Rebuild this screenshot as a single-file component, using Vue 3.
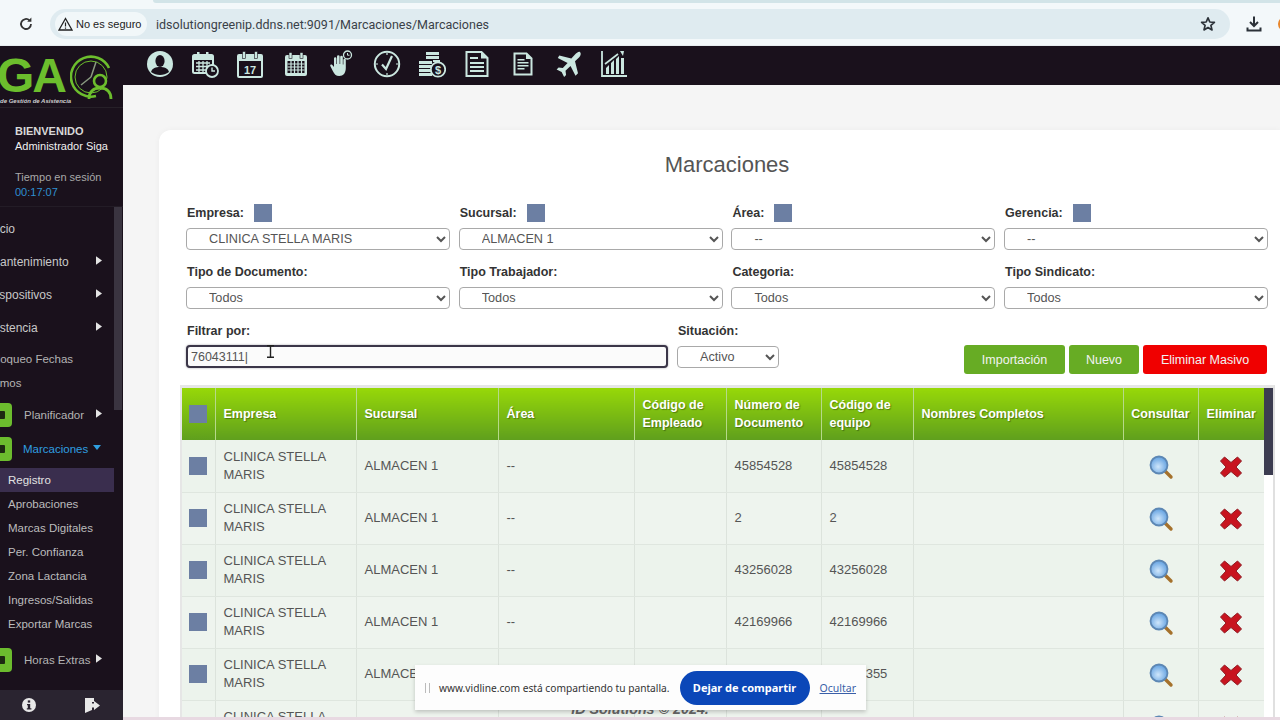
<template>
  <div class="page">
    <!-- browser bar -->
    <header class="chrome">
      <div class="tab-strip"></div>
      <div class="chrome-row">
        <svg class="reload" width="16" height="16" viewBox="0 0 16 16"><path d="M13 8a5 5 0 1 1-1.500-3.600" fill="none" stroke="#333" stroke-width="1.800"/><path d="M13.400 1.600v4.200H9.200z" fill="#333"/></svg>
        <div class="omnibox">
          <div class="chip">
            <svg width="15" height="14" viewBox="0 0 15 14"><path d="M7.500 1.500 14 13H1z" fill="none" stroke="#222" stroke-width="1.300"/><path d="M7.500 5.500v4M7.500 10.400v1.300" stroke="#222" stroke-width="1.200"/></svg>
            <span>No es seguro</span>
          </div>
          <span class="url">idsolutiongreenip.ddns.net:9091/Marcaciones/Marcaciones</span>
          <svg class="star" width="16" height="16" viewBox="0 0 16 16"><path d="M8 1.800 9.800 6l4.600.4-3.500 3 1.100 4.500L8 11.500l-4 2.400 1.100-4.500-3.500-3L6.200 6z" fill="none" stroke="#2b3138" stroke-width="1.700" stroke-linejoin="round"/></svg>
        </div>
        <svg class="download" width="18" height="18" viewBox="0 0 18 18"><path d="M9 1.500v9M5 7l4 4 4-4" fill="none" stroke="#2b3138" stroke-width="2"/><path d="M2.500 12.500v3h13v-3" fill="none" stroke="#2b3138" stroke-width="2"/></svg>
        <div class="avatar"></div>
      </div>
    </header>

    <div class="shell">
      <aside class="sidebar">
        <div class="logo">
          <span class="logo-ga">GA</span>
          <svg class="logo-mark" width="44" height="48" viewBox="0 0 44 48">
            <path d="M26 41A20 20 0 1 1 39 13" fill="none" stroke="#6cbe2d" stroke-width="2.600"/>
            <circle cx="21" cy="22" r="16" fill="none" stroke="#6cbe2d" stroke-width="1"/>
            <path d="M21 22 26 7M21 22 11 30" stroke="#8a9a80" stroke-width="1.500"/>
            <circle cx="30" cy="26" r="6" fill="#1a111c" stroke="#6cbe2d" stroke-width="2.600"/>
            <path d="M19 44c0-8 5-11 11-11s11 3 11 11" fill="none" stroke="#6cbe2d" stroke-width="2.800"/>
          </svg>
          <span class="logo-sub">de Gestión de Asistencia</span>
        </div>
        <div class="welcome">
          <strong>BIENVENIDO</strong>
          <span class="admin">Administrador Siga</span>
          <span class="session">Tiempo en sesión</span>
          <span class="time">00:17:07</span>
        </div>
        <nav class="nav">
          <div v-for="item in navItems" :key="item.label" class="nav-row" :class="item.kind">
            <span v-if="item.kind.startsWith('tile-row')" class="tile"><i></i></span>
            <span class="nav-label" :style="{ marginLeft: item.shift + 'px' }">{{ item.label }}</span>
            <svg v-if="item.arrow === 'right'" class="arrow" width="6" height="9" viewBox="0 0 7 10"><path d="M0 0l7 5-7 5z" fill="#e4e4e4"/></svg>
            <svg v-if="item.arrow === 'down'" class="arrow down" width="8" height="5" viewBox="0 0 10 6"><path d="M0 0h10L5 6z" fill="#2f9fe0"/></svg>
          </div>
        </nav>
        <div class="side-scroll"></div>
        <div class="side-foot">
          <svg width="14" height="14" viewBox="0 0 14 14"><circle cx="7" cy="7" r="7" fill="#e8e8e8"/><rect x="5.800" y="2.400" width="2.400" height="2.200" fill="#2a2430"/><path d="M5 6h3.200v4.200H9.400v1.400H4.800v-1.400h1V7.200H5z" fill="#2a2430"/></svg>
          <svg width="17" height="17" viewBox="0 0 17 17"><path d="M1 1h9v4H8v8l-7 3z" fill="#e8e8e8"/><path d="M10 6.500V4l6 4.500-6 4.500v-2.500H8v-4z" fill="#e8e8e8"/></svg>
        </div>
      </aside>

      <div class="main">
        <div class="topbar">
          <!-- user -->
          <span class="top-icon"><svg width="28" height="28" viewBox="0 0 28 28"><circle cx="14" cy="14" r="13" fill="#cbe7e0"/><ellipse cx="14" cy="11" rx="4.600" ry="6" fill="#1a111c"/><path d="M5 22c1-4 5-5 9-5s8 1 9 5c-2.500 2-6 3-9 3s-6.500-1-9-3z" fill="#1a111c"/></svg></span>
          <!-- calendar + clock -->
          <span class="top-icon"><svg width="28" height="28" viewBox="0 0 28 28"><rect x="2" y="5" width="20" height="18" rx="1.500" fill="none" stroke="#cbe7e0" stroke-width="2"/><rect x="2" y="5" width="20" height="5" fill="#cbe7e0"/><rect x="6" y="2" width="2.500" height="6" fill="#cbe7e0"/><rect x="15" y="2" width="2.500" height="6" fill="#cbe7e0"/><path d="M5 13h14M5 16.500h14M5 20h10M8 11v11M12 11v11M16 11v7" stroke="#cbe7e0" stroke-width="1.300"/><circle cx="21" cy="21" r="6" fill="#1a111c" stroke="#cbe7e0" stroke-width="1.800"/><path d="M21 17.500V21h3" fill="none" stroke="#cbe7e0" stroke-width="1.400"/></svg></span>
          <!-- calendar 17 -->
          <span class="top-icon"><svg width="28" height="28" viewBox="0 0 28 28"><rect x="2" y="5" width="24" height="22" rx="1" fill="none" stroke="#cbe7e0" stroke-width="2"/><rect x="2" y="5" width="24" height="6" fill="#cbe7e0"/><rect x="6.500" y="1.500" width="3" height="7" fill="#cbe7e0" stroke="#1a111c" stroke-width=".6"/><rect x="18.500" y="1.500" width="3" height="7" fill="#cbe7e0" stroke="#1a111c" stroke-width=".6"/><text x="14" y="23.500" text-anchor="middle" class="cal-num">17</text></svg></span>
          <!-- calendar grid -->
          <span class="top-icon"><svg width="26" height="26" viewBox="0 0 26 26"><rect x="2" y="4" width="22" height="21" rx="2" fill="#cbe7e0"/><rect x="6" y="1.500" width="3" height="6" fill="#cbe7e0" stroke="#1a111c" stroke-width=".6"/><rect x="17" y="1.500" width="3" height="6" fill="#cbe7e0" stroke="#1a111c" stroke-width=".6"/><rect x="4.500" y="10" width="17" height="12" fill="#1a111c"/><path d="M4.500 13h17M4.500 16h17M4.500 19h17M8 10v12M11.500 10v12M15 10v12M18.500 10v12" stroke="#cbe7e0" stroke-width="1.200"/></svg></span>
          <!-- hand + clock -->
          <span class="top-icon"><svg width="24" height="28" viewBox="0 0 24 28"><path d="M5 8.500a1.200 1.200 0 0 1 2.400 0V14h.6V6.500a1.300 1.300 0 0 1 2.600 0V14h.6V7a1.300 1.300 0 0 1 2.600 0v7.500h.6V10a1.200 1.200 0 0 1 2.400 0v8c0 5-2.500 8-6.500 8-3.500 0-5-2-6.500-5l-2.500-5c-.5-1.200 1-2 2-1l1.700 2z" fill="#cbe7e0"/><circle cx="18.500" cy="5" r="4" fill="none" stroke="#cbe7e0" stroke-width="1.300"/><path d="M18.500 3v2.200h2" fill="none" stroke="#cbe7e0"/></svg></span>
          <!-- clock check -->
          <span class="top-icon"><svg width="28" height="28" viewBox="0 0 28 28"><circle cx="14" cy="14" r="12.200" fill="none" stroke="#cbe7e0" stroke-width="2"/><path d="M9 14.500l4 4.500 6-13" fill="none" stroke="#cbe7e0" stroke-width="2.200"/><path d="M14 3v2M14 23v2M3 14h2M23 14h2" stroke="#cbe7e0" stroke-width="1.200"/></svg></span>
          <!-- coins -->
          <span class="top-icon"><svg width="28" height="28" viewBox="0 0 28 28"><path d="M1 11h13v3H1zM1 15h13v3H1zM1 19h13v3H1zM1 23h13v3H1zM8 2h13v3H8zM8 6h13v3H8z" fill="#cbe7e0"/><path d="M15 10h7v2h-7z" fill="#cbe7e0"/><circle cx="20" cy="19.500" r="7.200" fill="#1a111c" stroke="#cbe7e0" stroke-width="1.800"/><text x="20" y="23.500" text-anchor="middle" class="coin-sign">$</text></svg></span>
          <!-- big doc -->
          <span class="top-icon"><svg width="26" height="28" viewBox="0 0 26 28"><path d="M2.500 2h15l6 6v18h-21z" fill="none" stroke="#cbe7e0" stroke-width="2"/><path d="M17 2v6.500h6.500z" fill="#cbe7e0"/><path d="M6 7h8v2H6zM6 12h14v2H6zM6 16h14v2H6zM6 20h14v2H6z" fill="#cbe7e0"/></svg></span>
          <!-- small doc -->
          <span class="top-icon"><svg width="20" height="24" viewBox="0 0 20 24"><path d="M1.500 1.500h12l5 5v16h-17z" fill="none" stroke="#cbe7e0" stroke-width="2"/><path d="M13 1.500v5.500h5.500z" fill="#cbe7e0"/><path d="M4.500 7h7v1.500h-7zM4.500 10h11v1.500h-11zM4.500 13h11v1.500h-11zM4.500 16h7v1.500h-7z" fill="#cbe7e0"/></svg></span>
          <!-- plane -->
          <span class="top-icon"><svg width="28" height="28" viewBox="0 0 28 28"><path d="M26 2c1.500 1.500.5 4-1 5.500l-4 3.800 3 12-2.500 2.500-5-9.800-5 4.800.6 4.200-2 2-2.500-5-5-2.500 2-2 4.200.6 4.800-5-9.800-5L5.300 5.600l12 3L21 4.500C22.500 3 24.700 1 26 2z" fill="#cbe7e0"/></svg></span>
          <!-- chart -->
          <span class="top-icon"><svg width="28" height="28" viewBox="0 0 28 28"><path d="M2 1v25h25" fill="none" stroke="#cbe7e0" stroke-width="1.800"/><path d="M6 24v-6l3-3v9zM11 24V13l3-3v14zM16 24V9l3-3v18zM21 24V8h3v16z" fill="#cbe7e0"/><path d="M5 14 18 4" stroke="#cbe7e0" stroke-width="1.600"/><path d="M20 1l4 0-1 5z" fill="#cbe7e0"/></svg></span>
        </div>

        <div class="content">
          <section class="card">
            <h1>Marcaciones</h1>

            <div class="filters">
              <div v-for="field in filterFields" :key="field.label" class="field">
                <label>
                  {{ field.label }}
                  <span v-if="field.check" class="check"></span>
                </label>
                <select>
                  <option>{{ field.value }}</option>
                </select>
              </div>
            </div>

            <div class="search-row">
              <div class="field filter-by">
                <label>Filtrar por:</label>
                <input type="text" value="76043111|" />
                <svg class="ibeam" width="9" height="13" viewBox="0 0 9 13"><path d="M1 .7h7M4.500 .7v11.600M1 12.300h7" stroke="#222" stroke-width="1.400" fill="none"/></svg>
              </div>
              <div class="field status">
                <label>Situación:</label>
                <select>
                  <option>Activo</option>
                </select>
              </div>
              <div class="actions">
                <button class="btn green wide">Importación</button>
                <button class="btn green">Nuevo</button>
                <button class="btn red">Eliminar Masivo</button>
              </div>
            </div>

            <div class="table-wrap">
              <table>
                <colgroup>
                  <col v-for="w in colWidths" :key="w.id" :width="w.size" />
                </colgroup>
                <thead>
                  <tr>
                    <th class="center"><span class="check"></span></th>
                    <th>Empresa</th>
                    <th>Sucursal</th>
                    <th>Área</th>
                    <th>Código de Empleado</th>
                    <th>Número de Documento</th>
                    <th>Código de equipo</th>
                    <th>Nombres Completos</th>
                    <th class="center">Consultar</th>
                    <th class="center">Eliminar</th>
                  </tr>
                </thead>
                <tbody>
                  <tr v-for="(row, i) in rows" :key="i">
                    <td class="center"><span class="check"></span></td>
                    <td>CLINICA STELLA MARIS</td>
                    <td>ALMACEN 1</td>
                    <td>--</td>
                    <td></td>
                    <td>{{ row }}</td>
                    <td>{{ row }}</td>
                    <td></td>
                    <td class="center">
                      <svg width="26" height="26" viewBox="0 0 26 26">
                        <defs>
                          <radialGradient id="lens" cx="45%" cy="60%" r="60%"><stop offset="0" stop-color="#cfe6fb"/><stop offset="1" stop-color="#5f9fe0"/></radialGradient>
                        </defs>
                        <path d="M16 16l7 7" stroke="#a5712c" stroke-width="3.400" stroke-linecap="round"/>
                        <circle cx="11" cy="11" r="8.500" fill="url(#lens)" stroke="#5d87b4" stroke-width="1.800"/>
                      </svg>
                    </td>
                    <td class="center">
                      <svg width="24" height="24" viewBox="0 0 24 24">
                        <path d="M5.500 2 12 7.500 18.500 2 22.500 6 17 12l5.500 6-4 4L12 16.500 5.500 22l-4-4L7 12 1.500 6z" fill="#c8141f" stroke="#8f1a22" stroke-width="1" stroke-linejoin="round"/>
                      </svg>
                    </td>
                  </tr>
                </tbody>
              </table>
              <div class="table-scroll"><div class="thumb"></div></div>
            </div>
          </section>
        </div>
      </div>
    </div>

    <div class="copyright">ID Solutions © 2024.</div>
    <div class="bottom-strip"></div>

    <!-- screen share notice -->
    <div class="share">
      <span class="grip"></span>
      <span class="share-text">www.vidline.com está compartiendo tu pantalla.</span>
      <button class="stop">Dejar de compartir</button>
      <a class="hide">Ocultar</a>
    </div>
  </div>
</template>

<script setup>
const navItems = [
  { label: 'Inicio', kind: 'big', shift: -13 },
  { label: 'Mantenimiento', kind: 'big', shift: -10, arrow: 'right' },
  { label: 'Dispositivos', kind: 'big', shift: -12, arrow: 'right' },
  { label: 'Asistencia', kind: 'big', shift: -17, arrow: 'right' },
  { label: 'Bloqueo Fechas', kind: 'small first-small', shift: -10 },
  { label: 'Ramos', kind: 'small', shift: -15 },
  { label: 'Planificador', kind: 'tile-row plan', shift: 12, arrow: 'right' },
  { label: 'Marcaciones', kind: 'tile-row marc', shift: 11, arrow: 'down' },
  { label: 'Registro', kind: 'sub active', shift: 8 },
  { label: 'Aprobaciones', kind: 'sub', shift: 8 },
  { label: 'Marcas Digitales', kind: 'sub', shift: 8 },
  { label: 'Per. Confianza', kind: 'sub', shift: 8 },
  { label: 'Zona Lactancia', kind: 'sub', shift: 8 },
  { label: 'Ingresos/Salidas', kind: 'sub', shift: 8 },
  { label: 'Exportar Marcas', kind: 'sub', shift: 8 },
  { label: 'Horas Extras', kind: 'tile-row horas', shift: 12, arrow: 'right' }
]

const filterFields = [
  { label: 'Empresa:', value: 'CLINICA STELLA MARIS', check: true },
  { label: 'Sucursal:', value: 'ALMACEN 1', check: true },
  { label: 'Área:', value: '--', check: true },
  { label: 'Gerencia:', value: '--', check: true },
  { label: 'Tipo de Documento:', value: 'Todos' },
  { label: 'Tipo Trabajador:', value: 'Todos' },
  { label: 'Categoria:', value: 'Todos' },
  { label: 'Tipo Sindicato:', value: 'Todos' }
]

const colWidths = [33, 141, 142, 136, 92, 95, 92, 210, 75, 66].map((size, id) => ({ id, size }))

const rows = ['45854528', '2', '43256028', '42169966', '41628355', '40112233']
</script>

<style>
html,
body {
  margin: 0;
  height: 720px;
  overflow: hidden;
}
</style>

<style scoped>
.page {
  position: relative;
  width: 1280px;
  height: 720px;
  overflow: hidden;
  display: flex;
  flex-direction: column;
  font-family: "Liberation Sans", Arial, sans-serif;
  background: #f4f4f4;
}

.chrome {
  height: 46px;
  flex: none;
  background: #f3f8fa;
  position: relative;
  border-bottom: 1px solid #e6ecef;
  box-sizing: border-box;
}

.tab-strip {
  height: 3px;
  margin-left: 153px;
  background: #d2e4e8;
  border-bottom-left-radius: 6px;
}

.chrome-row {
  display: flex;
  align-items: center;
  height: 30px;
  margin-top: 6px;
}

.chrome-row svg {
  flex: none;
}

.reload {
  margin-left: 18px;
  margin-right: 16px;
}

.omnibox {
  width: 1180px;
  height: 30px;
  flex: none;
  box-sizing: border-box;
  border-radius: 15px;
  background: #dfebf0;
  display: flex;
  align-items: center;
  padding-left: 5px;
  padding-right: 14px;
}

.chip {
  display: flex;
  align-items: center;
  gap: 3px;
  height: 24px;
  width: 92px;
  box-sizing: border-box;
  padding-left: 3px;
  border-radius: 12px;
  background: #f1f7f9;
  font-size: 11px;
  color: #222;
  white-space: nowrap;
}

.url {
  margin-left: 9px;
  font-family: Roboto, sans-serif;
  font-size: 12.500px;
  color: #3a4148;
  white-space: nowrap;
}

.star {
  margin-left: auto;
}

.download {
  margin-left: 15px;
}

.avatar {
  width: 14px;
  height: 14px;
  flex: none;
  margin-left: 15px;
  border-radius: 7px 0 0 7px;
  background: #e8862a;
}

.shell {
  flex: 1;
  display: flex;
  min-height: 0;
}

.sidebar {
  position: relative;
  width: 123px;
  flex: none;
  background: #1a111c;
  color: #d4d4d4;
  display: flex;
  flex-direction: column;
}

.logo {
  position: relative;
  height: 62px;
  border-bottom: 1px solid #262028;
  box-sizing: border-box;
}

.logo-ga {
  position: absolute;
  left: -3px;
  top: 2px;
  font-size: 48px;
  line-height: 56px;
  font-weight: 700;
  letter-spacing: -2px;
  color: #6cbe2d;
}

.logo-mark {
  position: absolute;
  left: 70px;
  top: 9px;
}

.logo-sub {
  position: absolute;
  left: 0;
  top: 52px;
  font-size: 6px;
  font-style: italic;
  font-weight: 700;
  color: #cfcfcf;
  white-space: nowrap;
}

.welcome {
  display: flex;
  flex-direction: column;
  height: 99px;
  box-sizing: border-box;
  padding: 16px 0 0 15px;
  font-size: 11px;
  line-height: 15px;
  border-bottom: 1px solid #231c26;
}

.welcome strong {
  color: #d8d8d8;
}

.admin {
  color: #f0f0f0;
}

.session {
  margin-top: 16px;
  color: #a9a9a9;
}

.time {
  color: #2f8fd0;
}

.nav {
  padding-top: 5px;
  width: 114px;
  overflow: hidden;
}

.nav-row {
  position: relative;
  display: flex;
  align-items: center;
  white-space: nowrap;
}

.nav-row.big {
  height: 33px;
  font-size: 12px;
  color: #c8c8c8;
}

.nav-row.small {
  height: 24px;
  font-size: 11.500px;
  color: #b4b4b4;
}

.nav-row.first-small {
  margin-top: 3px;
}

.nav-row.tile-row {
  height: 24px;
  font-size: 11.500px;
  color: #b4b4b4;
}

.nav-row.plan {
  margin-top: 8px;
}

.nav-row.marc {
  margin-top: 10px;
  margin-bottom: 7px;
  color: #2f9fe0;
}

.nav-row.horas {
  margin-top: 12px;
}

.nav-row.sub {
  height: 24px;
  font-size: 11.500px;
  color: #bcbcbc;
}

.nav-row.active {
  background: #3a2e4e;
  color: #e2e2e2;
}

.tile {
  width: 12px;
  height: 24px;
  flex: none;
  border-radius: 0 4px 4px 0;
  background: #6cbc2e;
  display: flex;
  align-items: center;
}

.tile i {
  display: block;
  width: 5px;
  height: 8px;
  background: #1d2a12;
  border-radius: 0 1px 1px 0;
}

.arrow {
  position: absolute;
  left: 96px;
  top: 50%;
  margin-top: -6px;
}

.arrow.down {
  margin-top: -4px;
  left: 93px;
}

.side-scroll {
  position: absolute;
  left: 114px;
  top: 161px;
  width: 8px;
  height: 203px;
  background: #3a3440;
}

.side-foot {
  position: absolute;
  left: 0;
  right: 0;
  bottom: 0;
  height: 30px;
  background: #2a2430;
  display: flex;
  align-items: center;
  justify-content: space-between;
  padding: 0 22px;
  box-sizing: border-box;
}

.main {
  flex: 1;
  min-width: 0;
  display: flex;
  flex-direction: column;
}

.topbar {
  height: 39px;
  flex: none;
  display: flex;
  align-items: center;
  background: #1a111c;
  padding-left: 14px;
  padding-bottom: 4px;
  box-sizing: border-box;
}

.top-icon {
  width: 45.400px;
  flex: none;
  display: flex;
  justify-content: center;
}

.cal-num {
  font-family: "Liberation Sans", sans-serif;
  font-size: 11px;
  font-weight: 700;
  fill: #cbe7e0;
}

.coin-sign {
  font-family: "Liberation Sans", sans-serif;
  font-size: 11px;
  font-weight: 700;
  fill: #cbe7e0;
}

.content {
  flex: 1;
  padding: 45px 0 0 36px;
  min-height: 0;
  background: #f5f5f5;
}

.card {
  background: #fff;
  border-top-left-radius: 12px;
  padding: 21px 12px 0 27px;
  height: 600px;
  box-shadow: 0 0 6px rgba(0, 0, 0, 0.04);
}

h1 {
  margin: 0 0 25px;
  font-size: 22px;
  line-height: 28px;
  font-weight: 400;
  color: #555;
  text-align: center;
}

.filters {
  display: grid;
  grid-template-columns: repeat(4, 264px);
  column-gap: 8.700px;
  row-gap: 13px;
}

.field {
  display: flex;
  flex-direction: column;
}

label {
  height: 18px;
  margin-bottom: 6px;
  padding-left: 1px;
  display: flex;
  align-items: center;
  gap: 10px;
  font-size: 12.500px;
  font-weight: 700;
  color: #333;
}

select {
  height: 22px;
  padding: 0 0 0 18px;
  font-family: inherit;
  font-size: 12.700px;
  color: #555;
  background: #fff;
  border: 1px solid #a9a9a9;
  border-radius: 4px;
}

.check {
  display: inline-block;
  width: 18px;
  height: 18px;
  background: #6c7fa3;
}

.search-row {
  display: flex;
  margin-top: 13px;
}

.filter-by {
  position: relative;
  width: 482px;
  margin-right: 9px;
}

.filter-by input {
  height: 23px;
  margin-top: -1px;
  box-sizing: border-box;
  padding: 0 3px;
  font-family: inherit;
  font-size: 12.500px;
  color: #555;
  background: #fbfbfb;
  border: 2px solid #3b3648;
  border-radius: 4px;
  box-shadow: 0 0 2px rgba(59, 54, 72, 0.5);
  outline: none;
}

.ibeam {
  position: absolute;
  left: 80px;
  top: 23px;
}

.status {
  width: 102px;
}

.actions {
  margin-left: auto;
  margin-right: 1px;
  padding-top: 23px;
  display: flex;
  gap: 4px;
}

.btn {
  height: 29px;
  width: 70px;
  padding: 0;
  border: none;
  border-radius: 3px;
  font-family: inherit;
  font-size: 12.500px;
  color: #f2f2f2;
}

.btn.green {
  background: #67ac24;
}

.btn.wide {
  width: 101px;
}

.btn.red {
  width: 124px;
  background: #f00000;
}

.table-wrap {
  display: flex;
  margin: 11px 0 0 -6px;
  width: 1095px;
  border-top: 3px solid #e6e6e6;
  border-left: 2px solid #e6e6e6;
  border-right: 2px solid #e0e0e0;
  box-sizing: border-box;
  height: 346px;
  overflow: hidden;
}

table {
  width: 1082px;
  flex: none;
  table-layout: fixed;
  border-collapse: collapse;
  font-size: 13px;
  line-height: 18px;
  color: #555;
}

th {
  height: 52px;
  padding: 0 8px;
  box-sizing: border-box;
  text-align: left;
  font-size: 12.500px;
  font-weight: 700;
  color: #fff;
  text-shadow: 1px 1px 1px rgba(0, 0, 0, 0.35);
  background: linear-gradient(#97d808, #5f9f1d);
  border-right: 1px solid #b6d98a;
}

th:last-child,
td:last-child {
  border-right: none;
}

td {
  height: 52px;
  padding: 0 8px;
  box-sizing: border-box;
  background: #ecf3ec;
  border-right: 1px solid #dce3dc;
  border-bottom: 1px solid #dfe6df;
}

tbody tr:nth-child(even) td {
  background: #eef4ee;
}

.center {
  padding: 0;
  text-align: center;
}

.center .check,
.center svg {
  display: block;
  margin: 0 auto;
}

td.center svg {
  margin-top: 2px;
}

.table-scroll {
  width: 9px;
  flex: none;
  background: #fff;
}

.thumb {
  height: 87px;
  background: #3c3c50;
}

.copyright {
  position: absolute;
  left: 0;
  right: 0;
  bottom: 3px;
  text-align: center;
  font-size: 14.300px;
  line-height: 16px;
  font-weight: 700;
  font-style: italic;
  color: #666;
}

.bottom-strip {
  position: absolute;
  left: 123px;
  right: 0;
  bottom: 0;
  height: 3px;
  background: #e8d9e2;
}

.share {
  position: absolute;
  left: 415px;
  top: 665px;
  width: 451px;
  height: 45px;
  box-sizing: border-box;
  padding-left: 10px;
  display: flex;
  align-items: center;
  background: #fdfdfd;
  box-shadow: 0 2px 4px rgba(0, 0, 0, 0.2);
}

.grip {
  width: 3px;
  height: 10px;
  border-left: 1px solid #bbb;
  border-right: 1px solid #bbb;
}

.share-text {
  margin-left: 9px;
  font-family: "Noto Sans", sans-serif;
  font-size: 10.200px;
  color: #333;
  white-space: nowrap;
}

.stop {
  margin-left: 10px;
  width: 130px;
  height: 34px;
  padding: 0;
  border: none;
  border-radius: 17px;
  background: #0b47b8;
  color: #fff;
  font-family: "Noto Sans", sans-serif;
  font-size: 11px;
  font-weight: 700;
}

.hide {
  margin-left: 10px;
  font-family: "Noto Sans", sans-serif;
  font-size: 10.500px;
  color: #3a5fa8;
  text-decoration: underline;
}
</style>
